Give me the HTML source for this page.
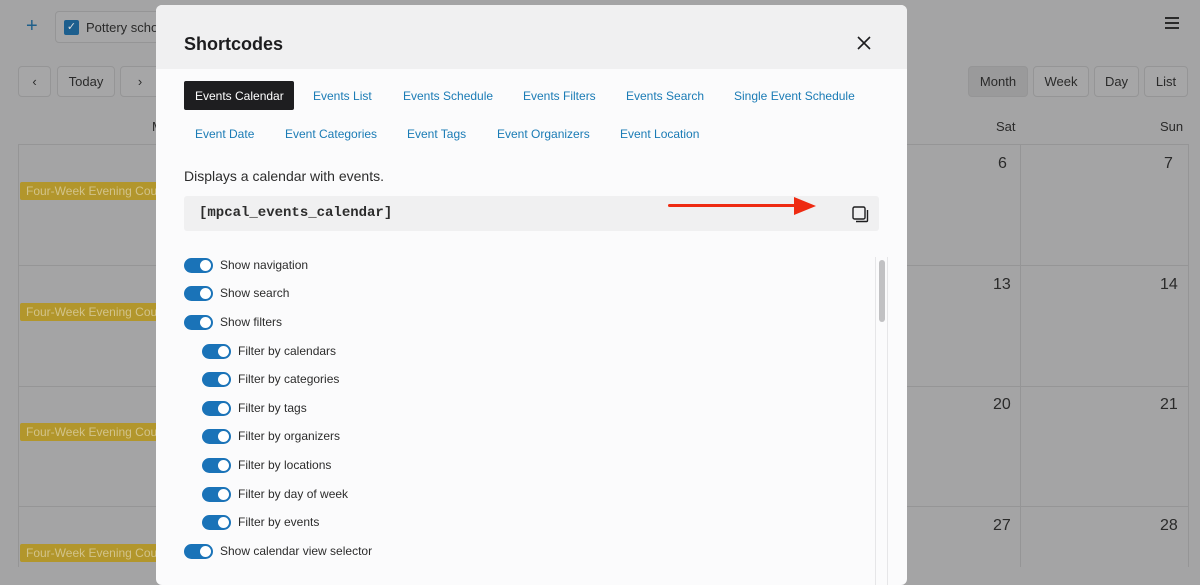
<!DOCTYPE html>
<html><head><meta charset="utf-8"><style>
*{box-sizing:border-box;margin:0;padding:0}
body{width:1200px;height:567px;overflow:hidden;background:#a4a4a5;font-family:"Liberation Sans",sans-serif;position:relative;color:#1d1d1f}
.a{position:absolute;white-space:nowrap}
.btn{position:absolute;border:1px solid #959596;border-radius:4px;background:#a6a6a7;font-size:13px;color:#2a2a2a;text-align:center}
.hl{position:absolute;background:#959596;height:1px}
.vl{position:absolute;background:#959596;width:1px}
.ev{position:absolute;left:20px;width:140px;height:18px;background:#b2962c;color:#d2c38a;font-size:12px;line-height:18px;padding-left:6px;border-radius:2px;overflow:hidden;white-space:nowrap}
.num{position:absolute;font-size:16px;color:#2a2a2a}
.modal{position:absolute;left:156px;top:5px;width:751px;height:580px;background:#fbfbfc;border-radius:6px;overflow:hidden}
.tab{position:absolute;font-size:12px;color:#1a7bb5;line-height:14px}
.tg{position:absolute;width:29px;height:15px;border-radius:8px;background:#1a73b8}
.tg::after{content:"";position:absolute;right:2px;top:2px;width:11px;height:11px;border-radius:50%;background:#fff}
.lb{position:absolute;font-size:12px;color:#2c2c2c;line-height:15px}
</style></head><body>
<div class="a" style="left:26px;top:15px;font-size:20px;color:#1f5f8a">+</div>
<div class="btn" style="left:55px;top:11px;width:120px;height:32px"></div>
<div class="a" style="left:64px;top:20px;width:15px;height:15px;background:#1d5f8e;border-radius:2px;color:#ddd;font-size:11px;text-align:center;line-height:15px">✓</div>
<div class="a" style="left:86px;top:20px;font-size:13px;color:#2a2a2a">Pottery scho</div>
<div class="a" style="left:1165px;top:17px;width:14px;height:2px;background:#2a2a2a;box-shadow:0 5px 0 #2a2a2a,0 10px 0 #2a2a2a"></div>
<div class="btn" style="left:18px;top:66px;width:33px;height:31px;line-height:29px">&lsaquo;</div>
<div class="btn" style="left:57px;top:66px;width:58px;height:31px;line-height:29px">Today</div>
<div class="btn" style="left:120px;top:66px;width:40px;height:31px;line-height:29px">&rsaquo;</div>
<div class="btn" style="left:968px;top:66px;width:60px;height:31px;line-height:29px;background:#9a9a9b">Month</div>
<div class="btn" style="left:1033px;top:66px;width:56px;height:31px;line-height:29px">Week</div>
<div class="btn" style="left:1094px;top:66px;width:45px;height:31px;line-height:29px">Day</div>
<div class="btn" style="left:1144px;top:66px;width:44px;height:31px;line-height:29px">List</div>
<div class="a" style="left:996px;top:119px;font-size:13px;color:#2a2a2a">Sat</div>
<div class="a" style="left:1160px;top:119px;font-size:13px;color:#2a2a2a">Sun</div>
<div class="a" style="left:152px;top:119px;font-size:13px;color:#2a2a2a">M</div>
<div class="hl" style="left:18px;top:144px;width:1171px"></div>
<div class="hl" style="left:18px;top:265px;width:1171px"></div>
<div class="hl" style="left:18px;top:386px;width:1171px"></div>
<div class="hl" style="left:18px;top:506px;width:1171px"></div>
<div class="vl" style="left:18px;top:144px;height:423px"></div>
<div class="vl" style="left:1020px;top:144px;height:423px"></div>
<div class="vl" style="left:1188px;top:144px;height:423px"></div>
<div class="ev" style="top:182px">Four-Week Evening Course</div>
<div class="ev" style="top:303px">Four-Week Evening Course</div>
<div class="ev" style="top:423px">Four-Week Evening Course</div>
<div class="ev" style="top:544px">Four-Week Evening Course</div>
<div class="num" style="left:998px;top:155px">6</div>
<div class="num" style="left:1164px;top:155px">7</div>
<div class="num" style="left:993px;top:276px">13</div>
<div class="num" style="left:1160px;top:276px">14</div>
<div class="num" style="left:993px;top:396px">20</div>
<div class="num" style="left:1160px;top:396px">21</div>
<div class="num" style="left:993px;top:517px">27</div>
<div class="num" style="left:1160px;top:517px">28</div>

<div class="modal">
 <div class="a" style="left:0;top:0;width:751px;height:64px;background:#f0f0f1"></div>
 <div class="a" style="left:28px;top:29px;font-size:18px;font-weight:bold;color:#1d1d1f">Shortcodes</div>
 <svg class="a" style="left:700px;top:30px" width="16" height="16" viewBox="0 0 16 16"><path d="M2 2L14 14M14 2L2 14" stroke="#1d1d1f" stroke-width="1.6"/></svg>
 <div class="a" style="left:28px;top:76px;width:110px;height:29px;background:#1e1e20;border-radius:2px"></div>
 <div class="tab" style="left:39px;top:84px;color:#fff">Events Calendar</div>
 <div class="tab" style="left:157px;top:84px">Events List</div>
 <div class="tab" style="left:247px;top:84px">Events Schedule</div>
 <div class="tab" style="left:367px;top:84px">Events Filters</div>
 <div class="tab" style="left:470px;top:84px">Events Search</div>
 <div class="tab" style="left:578px;top:84px">Single Event Schedule</div>
 <div class="tab" style="left:39px;top:122px">Event Date</div>
 <div class="tab" style="left:129px;top:122px">Event Categories</div>
 <div class="tab" style="left:251px;top:122px">Event Tags</div>
 <div class="tab" style="left:341px;top:122px">Event Organizers</div>
 <div class="tab" style="left:464px;top:122px">Event Location</div>
 <div class="a" style="left:28px;top:163px;font-size:14px;color:#2c2c2c">Displays a calendar with events.</div>
 <div class="a" style="left:28px;top:191px;width:695px;height:35px;background:#f0f0f1;border-radius:3px"></div>
 <div class="a" style="left:43px;top:200px;font-family:'Liberation Mono',monospace;font-size:14px;font-weight:bold;color:#2c2c2c">[mpcal_events_calendar]</div>
 <div class="a" style="left:512px;top:199px;width:130px;height:3px;background:#ee2b12;border-radius:2px"></div>
 <svg class="a" style="left:638px;top:192px" width="22" height="18"><path d="M0 0L22 9L0 18Z" fill="#ee2b12"/></svg>
 <svg class="a" style="left:696px;top:201px" width="18" height="18" viewBox="0 0 18 18"><rect x="1" y="1" width="12" height="12" rx="1.5" fill="none" stroke="#1d1d1f" stroke-width="1.4"/><path d="M15.5 4v10.5a1 1 0 0 1-1 1H4" fill="none" stroke="#1d1d1f" stroke-width="1.4"/></svg>
 <div class="a" style="left:719px;top:252px;width:1px;height:330px;background:#e6e6e8"></div>
 <div class="a" style="left:731px;top:252px;width:1px;height:330px;background:#e6e6e8"></div>
 <div class="a" style="left:723px;top:255px;width:6px;height:62px;background:#c1c1c3;border-radius:3px"></div>
 <div class="tg" style="left:28px;top:253px"></div><div class="lb" style="left:64px;top:253px">Show navigation</div>
 <div class="tg" style="left:28px;top:281px"></div><div class="lb" style="left:64px;top:281px">Show search</div>
 <div class="tg" style="left:28px;top:310px"></div><div class="lb" style="left:64px;top:310px">Show filters</div>
 <div class="tg" style="left:46px;top:339px"></div><div class="lb" style="left:82px;top:339px">Filter by calendars</div>
 <div class="tg" style="left:46px;top:367px"></div><div class="lb" style="left:82px;top:367px">Filter by categories</div>
 <div class="tg" style="left:46px;top:396px"></div><div class="lb" style="left:82px;top:396px">Filter by tags</div>
 <div class="tg" style="left:46px;top:424px"></div><div class="lb" style="left:82px;top:424px">Filter by organizers</div>
 <div class="tg" style="left:46px;top:453px"></div><div class="lb" style="left:82px;top:453px">Filter by locations</div>
 <div class="tg" style="left:46px;top:482px"></div><div class="lb" style="left:82px;top:482px">Filter by day of week</div>
 <div class="tg" style="left:46px;top:510px"></div><div class="lb" style="left:82px;top:510px">Filter by events</div>
 <div class="tg" style="left:28px;top:539px"></div><div class="lb" style="left:64px;top:539px">Show calendar view selector</div>
</div>
</body></html>
